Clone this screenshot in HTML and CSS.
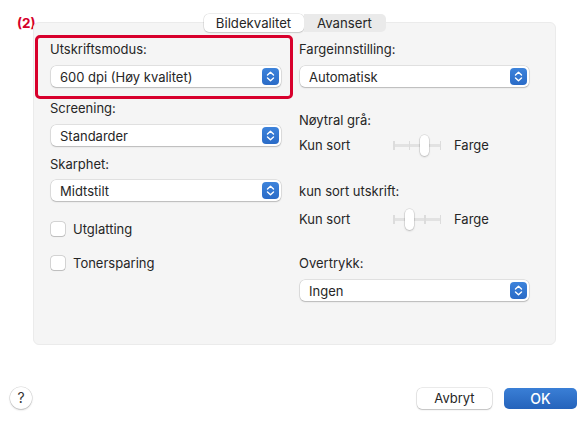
FILE: index.html
```html
<!DOCTYPE html>
<html lang="no">
<head>
<meta charset="utf-8">
<title>Utskrift</title>
<link rel="stylesheet" href="styles.css">
</head>
<body>
<div class="window">
  <div class="annot">(2)</div>
  <div class="tabs">
    <div class="tab active">Bildekvalitet</div>
    <div class="tab">Avansert</div>
  </div>
  <div class="panel">
    <div class="highlight"></div>
    <div class="col left">
      <div class="label l1">Utskriftsmodus:</div>
      <div class="select s1"><span>600 dpi (Høy kvalitet)</span><i class="step"><svg viewBox="0 0 17 17" width="17" height="17"><path d="M5.5 7 L8.5 4.2 L11.5 7 M5.5 10 L8.5 12.8 L11.5 10" fill="none" stroke="#fff" stroke-width="1.4" stroke-linecap="round" stroke-linejoin="round"/></svg></i></div>
      <div class="label l2">Screening:</div>
      <div class="select s2"><span>Standarder</span><i class="step"><svg viewBox="0 0 17 17" width="17" height="17"><path d="M5.5 7 L8.5 4.2 L11.5 7 M5.5 10 L8.5 12.8 L11.5 10" fill="none" stroke="#fff" stroke-width="1.4" stroke-linecap="round" stroke-linejoin="round"/></svg></i></div>
      <div class="label l3">Skarphet:</div>
      <div class="select s3"><span>Midtstilt</span><i class="step"><svg viewBox="0 0 17 17" width="17" height="17"><path d="M5.5 7 L8.5 4.2 L11.5 7 M5.5 10 L8.5 12.8 L11.5 10" fill="none" stroke="#fff" stroke-width="1.4" stroke-linecap="round" stroke-linejoin="round"/></svg></i></div>
      <div class="check c1"><span class="box"></span>Utglatting</div>
      <div class="check c2"><span class="box"></span>Tonersparing</div>
    </div>
    <div class="col right">
      <div class="label l1">Fargeinnstilling:</div>
      <div class="select s1"><span>Automatisk</span><i class="step"><svg viewBox="0 0 17 17" width="17" height="17"><path d="M5.5 7 L8.5 4.2 L11.5 7 M5.5 10 L8.5 12.8 L11.5 10" fill="none" stroke="#fff" stroke-width="1.4" stroke-linecap="round" stroke-linejoin="round"/></svg></i></div>
      <div class="label r2">Nøytral grå:</div>
      <div class="sliderrow r3">
        <span class="sl-l">Kun sort</span>
        <span class="slider"><i class="track"></i><i class="tick t0"></i><i class="tick t1"></i><i class="tick t2"></i><i class="tick t3"></i><i class="knob k2"></i></span>
        <span class="sl-r">Farge</span>
      </div>
      <div class="label r4">kun sort utskrift:</div>
      <div class="sliderrow r5">
        <span class="sl-l">Kun sort</span>
        <span class="slider"><i class="track"></i><i class="tick t0"></i><i class="tick t1"></i><i class="tick t2"></i><i class="tick t3"></i><i class="knob k1"></i></span>
        <span class="sl-r">Farge</span>
      </div>
      <div class="label r6">Overtrykk:</div>
      <div class="select r7"><span>Ingen</span><i class="step"><svg viewBox="0 0 17 17" width="17" height="17"><path d="M5.5 7 L8.5 4.2 L11.5 7 M5.5 10 L8.5 12.8 L11.5 10" fill="none" stroke="#fff" stroke-width="1.4" stroke-linecap="round" stroke-linejoin="round"/></svg></i></div>
    </div>
  </div>
  <div class="footer">
    <div class="help">?</div>
    <div class="buttons">
      <div class="btn cancel">Avbryt</div>
      <div class="btn ok">OK</div>
    </div>
  </div>
</div>
</body>
</html>
```
FILE: styles.css
```css
* { box-sizing: border-box; }
html, body { margin: 0; padding: 0; background: #fff; }
body {
  font-family: Inter, "Liberation Sans", sans-serif;
  font-size: 13px;
  color: #262626;
  width: 587px;
  height: 422px;
  overflow: hidden;
}
.window {
  position: relative;
  padding-top: 14px;
}
.annot {
  position: absolute;
  left: 17px;
  top: 16px;
  color: #d6002a;
  font-weight: 700;
  font-size: 13.5px;
  line-height: 15px;
}
.tabs {
  display: flex;
  justify-content: center;
  position: relative;
  z-index: 2;
  margin-bottom: -10px;
  padding-left: 2px;
}
.tab {
  height: 18px;
  line-height: 18px;
  background: #eaeaea;
  color: #262626;
  font-size: 13.2px;
  text-align: center;
  padding: 0;
}
.tab.active {
  width: 100px;
  background: #fff;
  border-radius: 5px;
  box-shadow: 0 0 0 0.5px rgba(0,0,0,0.14), 0 1px 1.5px rgba(0,0,0,0.12);
}
.tab:not(.active) {
  width: 82px;
  border-radius: 0 5px 5px 0;
}
.panel {
  position: relative;
  margin: 0 31px 0 33px;
  height: 323px;
  background: #f5f5f5;
  border: 1px solid #ebebeb;
  border-radius: 6px;
  display: grid;
  grid-template-columns: 230px 229px;
  column-gap: 19px;
  padding: 18px 0 0 17px;
}
.highlight {
  position: absolute;
  left: 1px;
  top: 12px;
  width: 258px;
  height: 64px;
  border: 3px solid #d8002c;
  border-radius: 5px;
  z-index: 3;
}
.col { display: flex; flex-direction: column; }
.label {
  height: 16px;
  line-height: 16px;
  white-space: nowrap;
  margin-left: -1px;
}
.select {
  position: relative;
  height: 21px;
  background: #fff;
  border-radius: 5px;
  box-shadow: 0 0 0 0.5px rgba(0,0,0,0.16), 0 1px 1.5px rgba(0,0,0,0.18);
  display: flex;
  align-items: center;
  padding-left: 9px;
}
.select span { flex: 1; line-height: 16px; }
.step {
  width: 17px;
  height: 17px;
  margin-right: 2px;
  border-radius: 4px;
  background: linear-gradient(#3d83db, #2a6bc7);
  display: flex;
}
.s1 { margin-top: 9px; }
.l2 { margin-top: 13px; }
.s2 { margin-top: 9px; }
.l3 { margin-top: 10px; }
.s3 { margin-top: 8px; }
.check {
  display: flex;
  align-items: center;
  height: 16px;
  line-height: 16px;
  gap: 8px;
}
.c1 { margin-top: 20px; }
.c2 { margin-top: 18px; }
.box {
  width: 14px;
  height: 14px;
  background: #fff;
  border-radius: 3px;
  box-shadow: 0 0 0 0.5px rgba(0,0,0,0.25), 0 0.5px 1px rgba(0,0,0,0.12);
}
.r2 { margin-top: 25px; }
.sliderrow {
  display: flex;
  align-items: center;
  height: 16px;
  line-height: 16px;
}
.r3 { margin-top: 9px; }
.r4 { margin-top: 30px; }
.r5 { margin-top: 12px; }
.r6 { margin-top: 28px; }
.r7 { margin-top: 9px; }
.sl-l { width: 94px; margin-left: -1px; }
.sl-r { margin-left: 13px; }
.slider {
  position: relative;
  width: 48px;
  height: 16px;
}
.track {
  position: absolute;
  left: 0; right: 0;
  top: 7px;
  height: 3px;
  background: #e2e2e2;
  border-radius: 1.5px;
}
.tick {
  position: absolute;
  top: 4px;
  width: 1.5px;
  height: 9px;
  background: #dcdcdc;
}
.t0 { left: 0; }
.t1 { left: 15.5px; }
.t2 { left: 31px; }
.t3 { left: 46.5px; }
.knob {
  position: absolute;
  top: -2px;
  width: 9px;
  height: 21px;
  background: #fff;
  border-radius: 5px;
  box-shadow: 0 0 0 0.5px rgba(0,0,0,0.14), 0 1px 2px rgba(0,0,0,0.2);
}
.k2 { left: 27px; }
.k1 { left: 12px; }
.footer {
  display: flex;
  align-items: center;
  justify-content: space-between;
  margin-top: 42px;
  padding: 0 10px 0 10px;
}
.help {
  width: 22px;
  height: 22px;
  border-radius: 50%;
  background: #fff;
  box-shadow: 0 0 0 0.5px rgba(0,0,0,0.15), 0 1px 2px rgba(0,0,0,0.2);
  text-align: center;
  line-height: 22px;
  font-size: 14px;
  color: #333;
}
.buttons { display: flex; gap: 12px; }
.btn {
  height: 21px;
  line-height: 21px;
  border-radius: 5px;
  text-align: center;
  font-size: 13px;
}
.cancel {
  width: 75px;
  background: #fff;
  box-shadow: 0 0 0 0.5px rgba(0,0,0,0.16), 0 1px 1.5px rgba(0,0,0,0.18);
  color: #262626;
}
.ok {
  width: 73px;
  background: linear-gradient(#3a7fd6, #2563bb);
  color: #fff;
  font-weight: 500;
  font-size: 14px;
}
```
